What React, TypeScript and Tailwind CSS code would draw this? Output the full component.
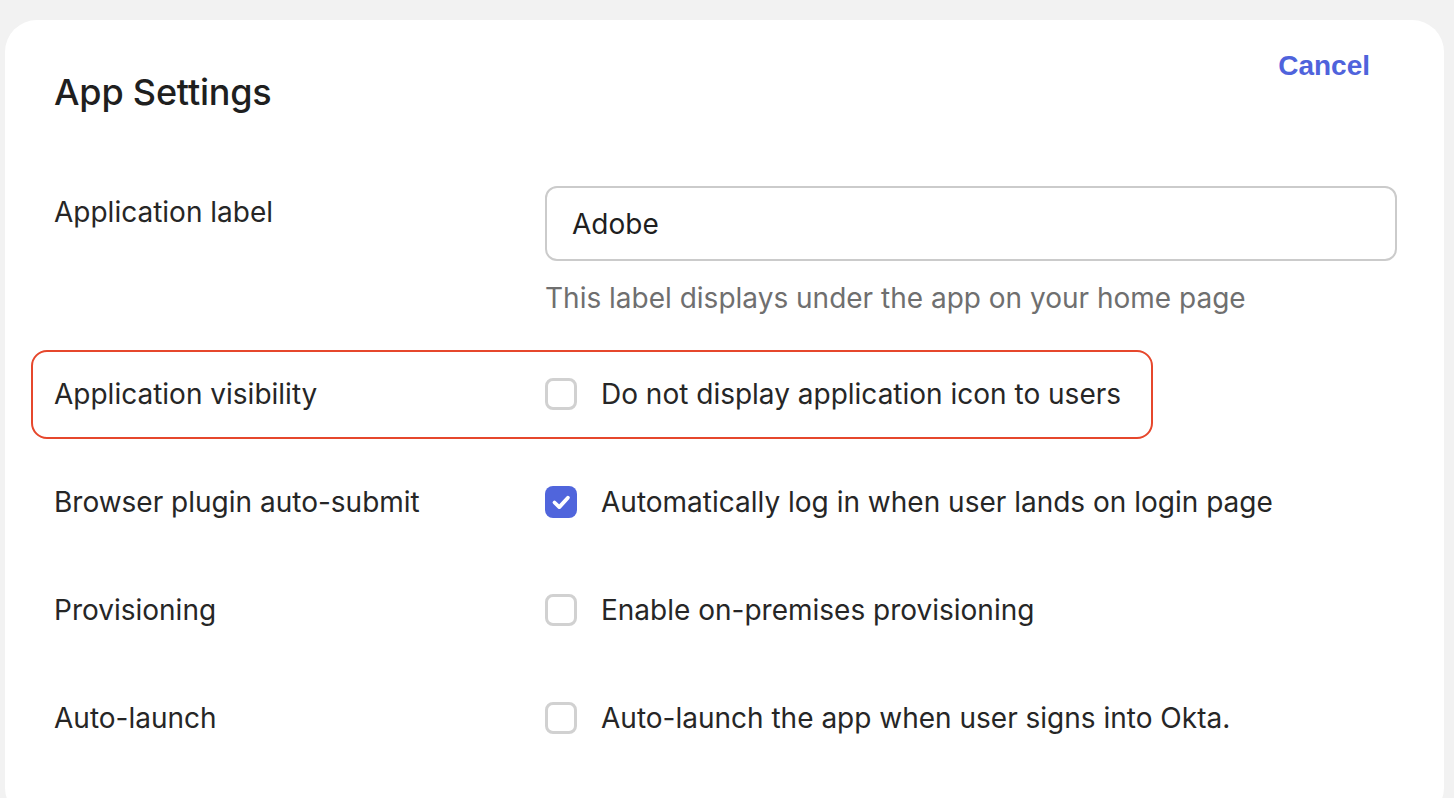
import React from "react";

const font = { fontFamily: "Inter, 'Noto Sans', 'Liberation Sans', sans-serif" };

function Checkbox({ checked }: { checked?: boolean }) {
  if (checked) {
    return (
      <span className="flex h-[32px] w-[32px] shrink-0 items-center justify-center rounded-[8px] bg-[#5065dc]">
        <svg width="32" height="32" viewBox="0 0 32 32" fill="none">
          <path d="M9.5 16.5l4.8 4.6 8.6-9.4" stroke="#fff" strokeWidth="3.8" strokeLinecap="round" strokeLinejoin="round" />
        </svg>
      </span>
    );
  }
  return <span className="block h-[32px] w-[32px] shrink-0 rounded-[8px] border-[3px] border-[#d1d1d1] bg-white" />;
}

function CheckRow({
  label,
  text,
  checked,
  highlight,
}: {
  label: string;
  text: string;
  checked?: boolean;
  highlight?: boolean;
}) {
  return (
    <div className="relative grid h-[108px] grid-cols-[491px_1fr] items-center">
      {highlight && (
        <div className="pointer-events-none absolute left-[-23px] top-[10px] h-[89px] w-[1122px] rounded-[16px] border-[2.5px] border-[#e6472c]" />
      )}
      <div className="text-[28px] leading-[34px] text-[#262626]">{label}</div>
      <label className="flex items-center gap-[24px]">
        <Checkbox checked={checked} />
        <span className="text-[28px] leading-[34px] text-[#262626]">{text}</span>
      </label>
    </div>
  );
}

export default function App() {
  return (
    <div className="min-h-screen overflow-hidden bg-[#f2f2f2] pl-[5px] pr-[10px] pt-[20px]" style={font}>
      <div className="h-[800px] rounded-[32px] bg-white pl-[49px] pr-[47px]">
        <div className="flex items-start justify-between">
          <h1 className="mt-[50px] text-[36px] font-medium leading-[44px] tracking-[-0.2px] text-[#1f1f1f]">
            App Settings
          </h1>
          <button
            className="mr-[27px] mt-[29px] text-[28px] font-bold leading-[34px] text-[#4f63dc]"
            style={{ fontFamily: "'Liberation Sans', Arial, sans-serif" }}
          >
            Cancel
          </button>
        </div>

        <div className="mt-[72px] grid grid-cols-[491px_1fr]">
          <div className="pt-[9px] text-[28px] leading-[34px] text-[#262626]">Application label</div>
          <div>
            <div className="flex h-[75px] items-center rounded-[12px] border-2 border-[#cbcbcb] pl-[25px] text-[28px] text-[#1f1f1f]">
              Adobe
            </div>
            <div className="mt-[20px] text-[28px] leading-[34px] text-[#6f6f6f]">
              This label displays under the app on your home page
            </div>
          </div>
        </div>

        <div className="mt-[25px]">
          <CheckRow label="Application visibility" text="Do not display application icon to users" highlight />
          <CheckRow label="Browser plugin auto-submit" text="Automatically log in when user lands on login page" checked />
          <CheckRow label="Provisioning" text="Enable on-premises provisioning" />
          <CheckRow label="Auto-launch" text="Auto-launch the app when user signs into Okta." />
        </div>
      </div>
    </div>
  );
}
